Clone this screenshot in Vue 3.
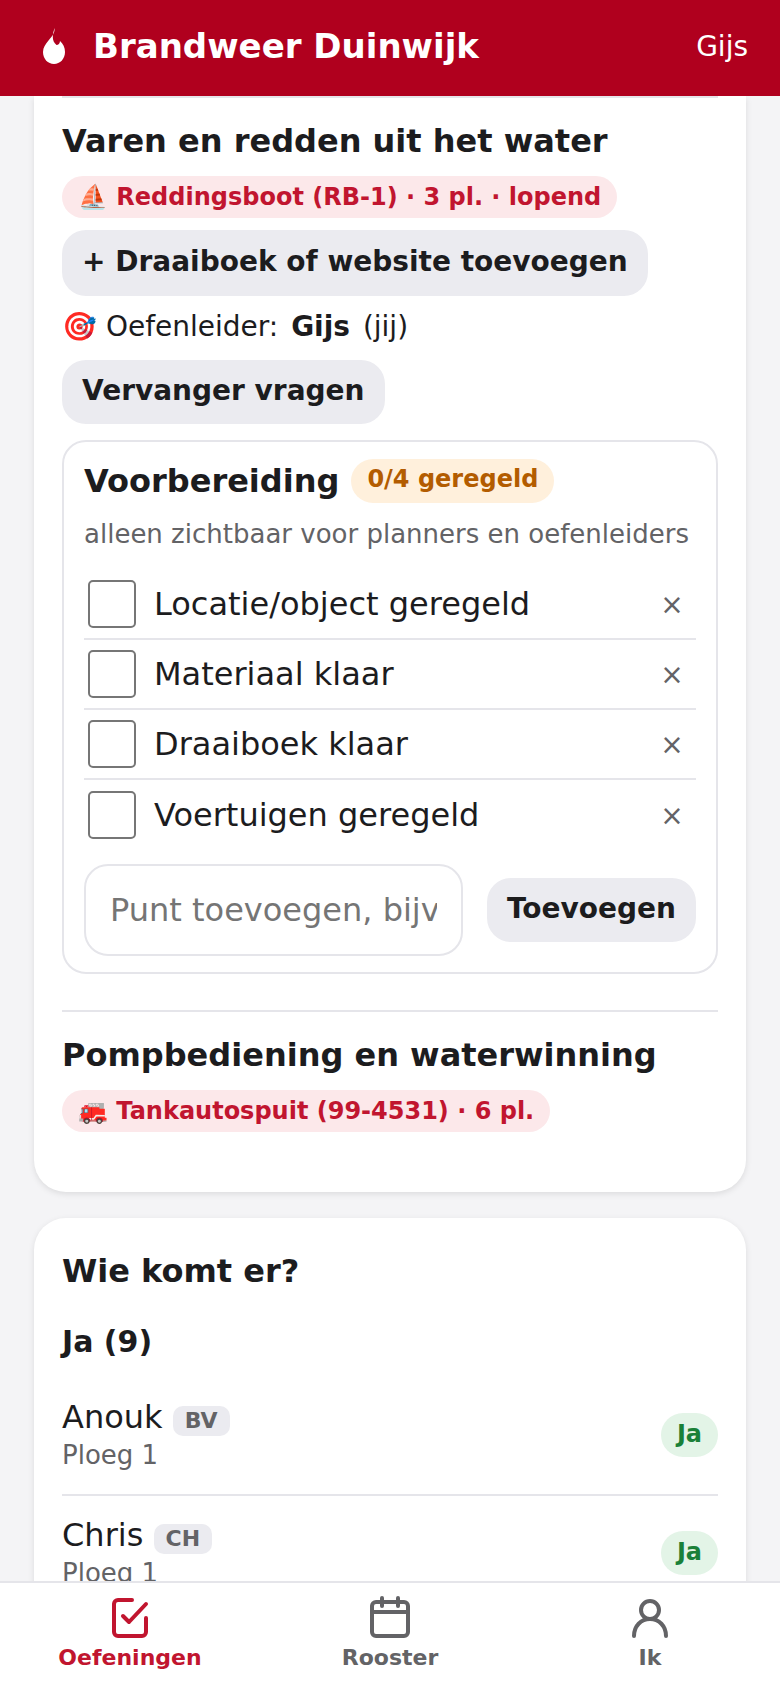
<script setup>
const prepItems = ['Locatie/object geregeld', 'Materiaal klaar', 'Draaiboek klaar', 'Voertuigen geregeld'];
const tabs = ['Oefeningen', 'Rooster', 'Ik'];
const people = [
  { name: 'Anouk', tag: 'BV', ploeg: 'Ploeg 1' },
  { name: 'Chris', tag: 'CH', ploeg: 'Ploeg 1' },
];
</script>

<template>
  <div class="app">
    <header class="topbar">
      <div class="brand">
        <svg class="flame" viewBox="0 0 22 36" width="22" height="36">
          <path d="M11.500 0C12 5 9.500 7.500 5.500 12.500C2.500 16 0 19.500 0 24C0 31 5 36 11 36C17 36 22 31 22 24C22 19.500 20 15.500 17 13C16.800 15.500 15.500 17 13.500 17C11 15 9.800 12 9.800 9C9.800 5.500 10.800 3 11.500 0Z" fill="#fff"/>
        </svg>
        <span class="brand-name">Brandweer Duinwijk</span>
      </div>
      <span class="user">Gijs</span>
    </header>

    <main class="content">
      <section class="card card-cut">
        <hr class="divider first">
        <h3 class="oefening-title">Varen en redden uit het water</h3>
        <div class="pill">⛵ Reddingsboot (RB-1) · 3 pl. · lopend</div>
        <button class="btn btn-block">+ Draaiboek of website toevoegen</button>
        <p class="leider">🎯 Oefenleider: <b>Gijs</b> <span>(jij)</span></p>
        <button class="btn">Vervanger vragen</button>

        <div class="prep">
          <div class="prep-head">
            <h4>Voorbereiding</h4>
            <span class="badge">0/4 geregeld</span>
          </div>
          <p class="prep-note">alleen zichtbaar voor planners en oefenleiders</p>
          <ul class="prep-list">
            <li v-for="item in prepItems" :key="item">
              <span class="check"></span>
              <span class="prep-label">{{ item }}</span>
              <span class="remove">×</span>
            </li>
          </ul>
          <form class="prep-add" @submit.prevent>
            <input type="text" placeholder="Punt toevoegen, bijv. sleutel ophalen">
            <button class="btn" type="submit">Toevoegen</button>
          </form>
        </div>

        <hr class="divider second">
        <h3 class="oefening-title">Pompbediening en waterwinning</h3>
        <div class="pill">🚒 Tankautospuit (99-4531) · 6 pl.</div>
      </section>

      <section class="card">
        <h3 class="who-title">Wie komt er?</h3>
        <h4 class="who-group">Ja (9)</h4>
        <div v-for="p in people" :key="p.name" class="person">
          <div class="person-info">
            <div class="person-name">{{ p.name }} <span class="tag">{{ p.tag }}</span></div>
            <div class="person-ploeg">{{ p.ploeg }}</div>
          </div>
          <span class="status">Ja</span>
        </div>
      </section>
    </main>

    <nav class="tabbar">
      <a class="tab active">
        <svg viewBox="0 0 24 24" width="48" height="48" fill="none" stroke="currentColor" stroke-width="2" stroke-linecap="round" stroke-linejoin="round">
          <path d="M13 3H6a2 2 0 0 0-2 2v14a2 2 0 0 0 2 2h12a2 2 0 0 0 2-2v-7"/>
          <path d="M8.500 11l3 3 8.500-9"/>
        </svg>
        <span>{{ tabs[0] }}</span>
      </a>
      <a class="tab">
        <svg viewBox="0 0 24 24" width="48" height="48" fill="none" stroke="currentColor" stroke-width="2" stroke-linecap="round" stroke-linejoin="round">
          <rect x="3" y="4" width="18" height="17" rx="2"/>
          <path d="M8 2v4M16 2v4M3 9h18"/>
        </svg>
        <span>{{ tabs[1] }}</span>
      </a>
      <a class="tab">
        <svg viewBox="0 0 24 24" width="48" height="48" fill="none" stroke="currentColor" stroke-width="2" stroke-linecap="round" stroke-linejoin="round">
          <circle cx="12" cy="8" r="4.500"/>
          <path d="M4 21c0-5 3.500-8.500 8-8.500s8 3.500 8 8.500"/>
        </svg>
        <span>{{ tabs[2] }}</span>
      </a>
    </nav>
  </div>
</template>

<style>
html, body {
  margin: 0;
  background: #f4f4f6;
}
</style>

<style scoped>
* {
  box-sizing: border-box;
}
.app {
  height: 1688px;
  display: flex;
  flex-direction: column;
  overflow: hidden;
  background: #f4f4f6;
  color: #1c1c1e;
  font-family: "DejaVu Sans", sans-serif;
  font-size: 28px;
}
.topbar {
  flex: none;
  height: 96px;
  background: #b0001e;
  color: #fff;
  display: flex;
  align-items: center;
  justify-content: space-between;
  padding: 0 32px 4px 43px;
}
.brand {
  display: flex;
  align-items: center;
  gap: 28px;
}
.brand-name {
  font-size: 34px;
  font-weight: 700;
}
.user {
  font-size: 28px;
}
.content {
  flex: 1;
  min-height: 0;
  overflow: hidden;
  padding: 0 34px;
}
.card {
  background: #fff;
  border-radius: 32px;
  padding: 28px;
  margin-bottom: 26px;
  box-shadow: 0 2px 6px rgba(0, 0, 0, 0.1);
}
.card-cut {
  border-radius: 0 0 32px 32px;
  padding-top: 0;
  padding-bottom: 60px;
}
.divider {
  border: none;
  border-top: 2px solid #e5e5ea;
  margin: 0;
}
.divider.second {
  margin: 36px 0 23px;
}
.oefening-title {
  margin: 0;
  font-size: 32px;
  font-weight: 700;
  line-height: 40px;
}
.divider.first + .oefening-title {
  margin-top: 23px;
}
.pill {
  display: table;
  margin-top: 15px;
  height: 42px;
  line-height: 42px;
  padding: 0 16px;
  border-radius: 21px;
  background: #fce8ea;
  color: #c1152f;
  font-size: 24px;
  font-weight: 700;
}
.btn {
  display: block;
  height: 64px;
  padding: 0 20px 4px;
  border: none;
  border-radius: 24px;
  background: #ebebf0;
  color: #1c1c1e;
  font-family: inherit;
  font-size: 28px;
  font-weight: 700;
}
.btn-block {
  height: 66px;
  margin-top: 12px;
}
.leider {
  margin: 9px 0 11px;
  line-height: 44px;
  font-size: 28px;
}
.leider b {
  margin: 0 4px;
}
.prep {
  margin-top: 16px;
  border: 2px solid #e5e5ea;
  border-radius: 24px;
  padding: 18px 20px 16px;
}
.prep-head {
  display: flex;
  align-items: center;
  gap: 12px;
  margin-top: -1px;
}
.prep-head h4 {
  margin: 0;
  font-size: 32px;
  font-weight: 700;
}
.badge {
  height: 44px;
  line-height: 40px;
  padding: 0 16px;
  border-radius: 22px;
  background: #fff0dc;
  color: #b35c00;
  font-size: 24px;
  font-weight: 700;
}
.prep-note {
  margin: 13px 0 18px;
  line-height: 36px;
  font-size: 26px;
  color: #636366;
}
.prep-list {
  list-style: none;
  margin: 0;
  padding: 0;
}
.prep-list li {
  height: 70px;
  display: flex;
  align-items: center;
  border-bottom: 2px solid #e5e5ea;
  padding: 0 0 0 4px;
}
.prep-list li:last-child {
  border-bottom: none;
}
.check {
  flex: none;
  width: 48px;
  height: 48px;
  border: 2px solid #767676;
  border-radius: 5px;
}
.prep-label {
  flex: 1;
  margin-left: 18px;
  font-size: 32px;
}
.remove {
  width: 48px;
  text-align: center;
  color: #636366;
  font-size: 28px;
}
.prep-add {
  display: flex;
  align-items: center;
  gap: 24px;
  margin-top: 14px;
}
.prep-add input {
  flex: 1;
  min-width: 0;
  height: 92px;
  padding: 0 24px;
  border: 2px solid #e5e5ea;
  border-radius: 24px;
  background: #fff;
  font-family: inherit;
  font-size: 32px;
  outline: none;
}
.prep-add input::placeholder {
  color: #757575;
}
.who-title {
  margin: 6px 0 0;
  font-size: 32px;
  font-weight: 700;
}
.who-group {
  margin: 34px 0 19px;
  font-size: 30px;
  font-weight: 700;
}
.person {
  display: flex;
  align-items: center;
  justify-content: space-between;
  height: 118px;
  border-bottom: 2px solid #e5e5ea;
}
.person-info {
  padding-bottom: 4px;
}
.person-name {
  font-size: 32px;
}
.tag {
  display: inline-block;
  height: 30px;
  line-height: 30px;
  margin-top: 4px;
  padding: 0 12px;
  border-radius: 10px;
  background: #ebebf0;
  color: #636366;
  font-size: 22px;
  font-weight: 700;
  vertical-align: middle;
}
.person-ploeg {
  margin-top: 4px;
  font-size: 26px;
  color: #636366;
}
.status {
  height: 44px;
  line-height: 42px;
  margin-bottom: 2px;
  padding: 0 16px;
  border-radius: 22px;
  background: #e3f4e7;
  color: #1a8038;
  font-size: 24px;
  font-weight: 700;
}
.tabbar {
  flex: none;
  height: 107px;
  background: #fff;
  border-top: 2px solid #e5e5ea;
  display: grid;
  grid-template-columns: repeat(3, 1fr);
}
.tab {
  display: flex;
  flex-direction: column;
  align-items: center;
  color: #636366;
  font-size: 22px;
  font-weight: 700;
  padding-top: 11px;
}
.tab.active {
  color: #c1152f;
}
.tab span {
  line-height: 26px;
  margin-top: 3px;
}
</style>
